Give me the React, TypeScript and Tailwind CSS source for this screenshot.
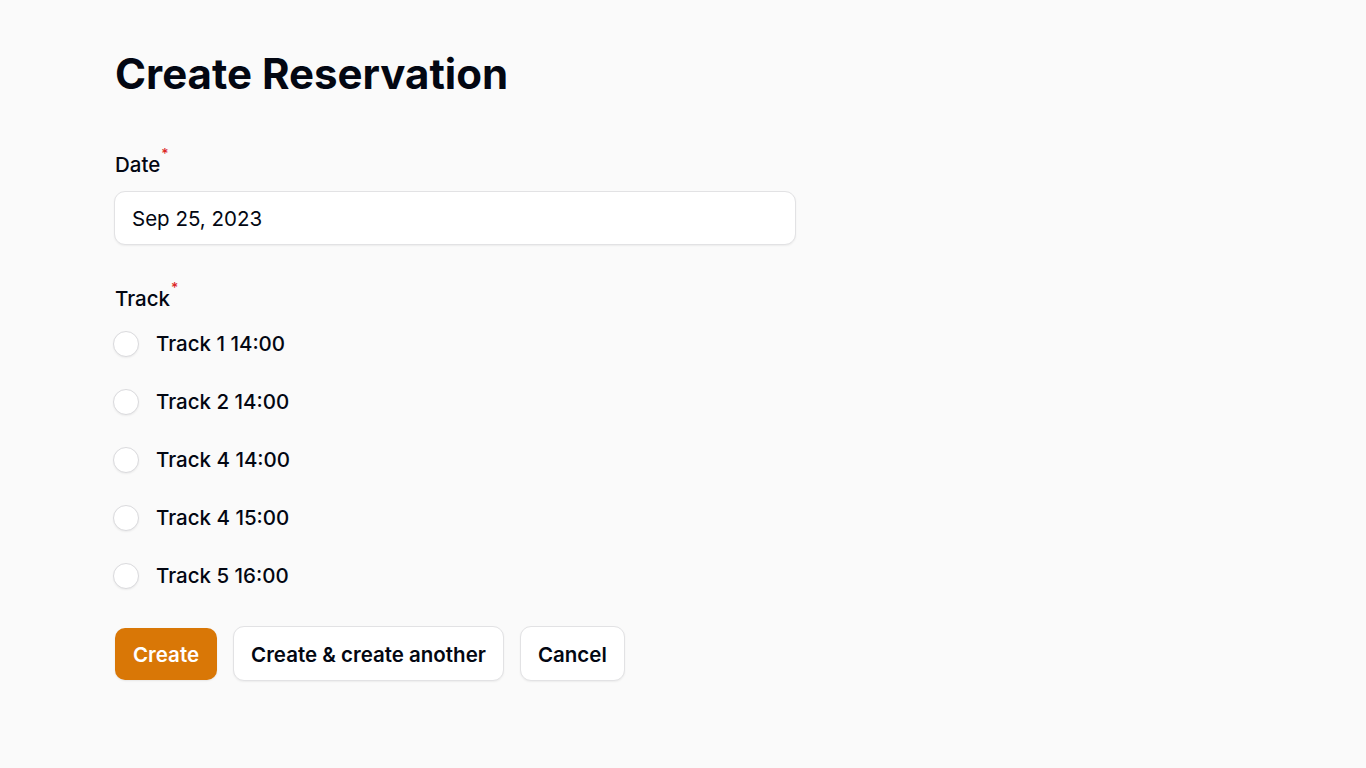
import React from 'react';

const tracks = ['Track 1 14:00', 'Track 2 14:00', 'Track 4 14:00', 'Track 4 15:00', 'Track 5 16:00'];

function Label({ text, className = '' }: { text: string; className?: string }) {
  return (
    <label className={`flex items-start text-[20.5px] leading-[28px] font-medium text-[#030712] ${className}`}>
      {text}
      <span className="ml-[1px] text-[#dc2626] text-[14px] leading-[14px] font-medium relative top-[-4px]">*</span>
    </label>
  );
}

export default function App() {
  return (
    <div className="min-h-screen bg-[#fafafa] text-[#111827] font-['Inter',sans-serif]">
      <div className="pl-[114px] pt-[46px]">
        <h1 className="ml-px text-[42px] leading-[56px] font-bold text-[#030712]">Create Reservation</h1>

        <form className="mt-[49px] w-[682px]">
          <Label text="Date" className="ml-px" />
          <div className="mt-[12px] h-[54px] rounded-[11px] bg-white border border-[#e2e2e4] shadow-[0_1px_2px_rgba(0,0,0,0.06)] flex items-center px-[17px] pt-[2px] text-[20.5px] text-[#030712]">
            Sep 25, 2023
          </div>

          <Label text="Track" className="mt-[40px] ml-px" />
          <div className="mt-[18px] flex flex-col gap-[32px]">
            {tracks.map((t) => (
              <div key={t} className="flex items-center h-[26px] -ml-px">
                <span className="w-[26px] h-[26px] rounded-full bg-white border border-[#dadadd] shadow-[0_1px_2px_rgba(0,0,0,0.06)]" />
                <span className="ml-[17px] pt-px text-[20.5px] font-medium text-[#030712]">{t}</span>
              </div>
            ))}
          </div>

          <div className="mt-[37px] ml-px flex items-center gap-[16px]">
            <button type="button" className="h-[52px] px-[18px] pt-[3px] rounded-[10px] bg-[#d97706] text-white text-[20.5px] font-semibold shadow-[0_1px_2px_rgba(0,0,0,0.08)]">
              Create
            </button>
            <button type="button" className="h-[55px] px-[17px] pt-[3px] rounded-[11px] bg-white border border-[#e2e2e4] text-[20.5px] font-semibold text-[#030712] shadow-[0_1px_2px_rgba(0,0,0,0.06)]">
              Create &amp; create another
            </button>
            <button type="button" className="h-[55px] px-[17px] pt-[3px] rounded-[11px] bg-white border border-[#e2e2e4] text-[20.5px] font-semibold text-[#030712] shadow-[0_1px_2px_rgba(0,0,0,0.06)]">
              Cancel
            </button>
          </div>
        </form>
      </div>
    </div>
  );
}
